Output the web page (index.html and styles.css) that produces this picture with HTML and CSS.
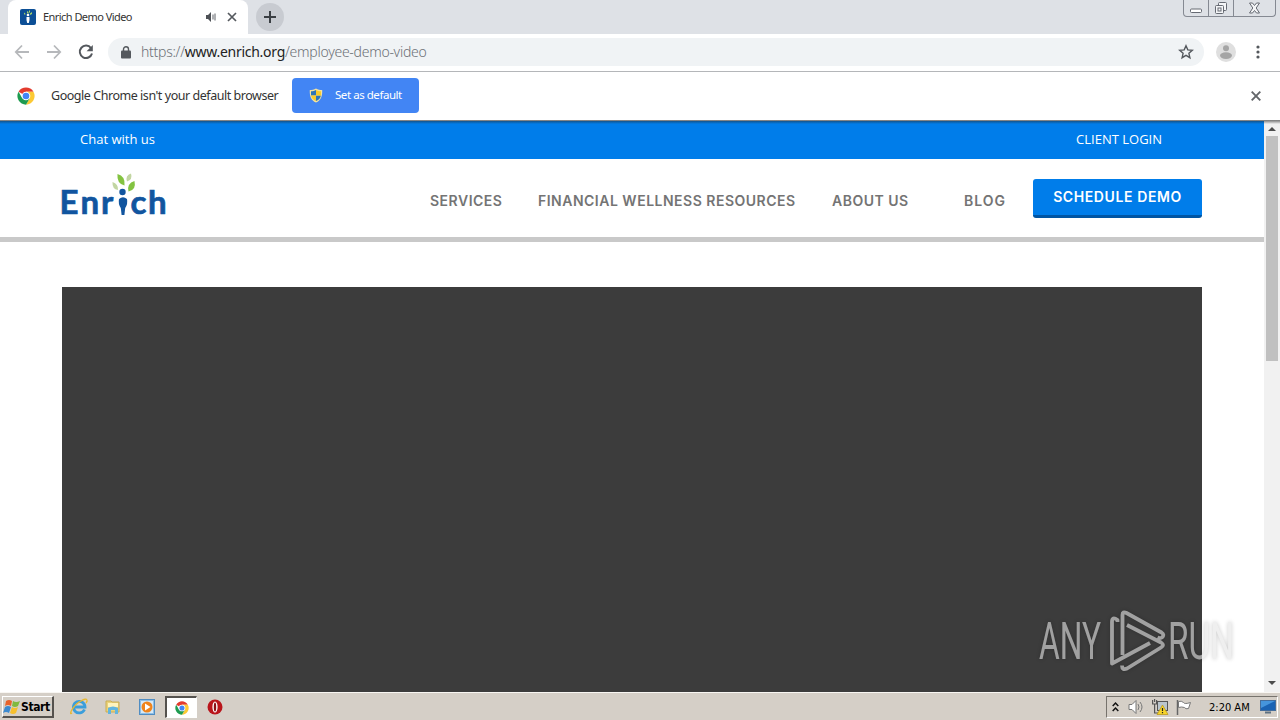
FILE: index.html
```html
<!DOCTYPE html>
<html lang="en">
<head>
  <meta charset="utf-8">
  <title>Enrich Demo Video</title>
  <link rel="stylesheet" href="styles.css">
</head>
<body>
  <svg class="defs" width="0" height="0">
    <symbol id="chrome" viewBox="0 0 48 48">
      <circle cx="24" cy="24" r="23" fill="#fff"/>
      <path d="M24 24 4.100 12.500A23 23 0 0 1 43.900 12.500L24 12.500z" fill="#e33b2e"/>
      <path d="M24 12.500H43.900A23 23 0 0 1 24 47L34 29.700z" fill="#fcc934"/>
      <path d="M4.100 12.500A23 23 0 0 0 24 47L34 29.700 14 29.700z" fill="#1e9b50"/>
      <circle cx="24" cy="24" r="11.500" fill="#fff"/>
      <circle cx="24" cy="24" r="8.800" fill="#4285f4"/>
    </symbol>
  </svg>

  <!-- browser tabs -->
  <div class="tabstrip">
    <div class="tab-edge"></div>
    <div class="tab">
      <svg class="favicon" width="16" height="16" viewBox="0 0 16 16">
        <rect width="16" height="16" rx="2" fill="#0c4f96"/>
        <circle cx="8" cy="6" r="1.300" fill="#fff"/>
        <path d="M6.500 8h3v3L8.800 14H7.200L6.500 11z" fill="#fff"/>
        <path d="M7 2l1.500 1v2L7 4zM4 3.500l1.500 1.200L5 6 4 5zM12 3l-2 1.500v1.500l2-1zM9 1.500h1v2H9z" fill="#a8d468"/>
      </svg>
      <span class="tab-title">Enrich Demo Video</span>
      <svg class="sound" width="12" height="12" viewBox="0 0 12 12">
        <path d="M1 4h2l3-3v10L3 8H1z" fill="#4d5156"/>
        <path d="M8 3.500v5M10 2.500v7" stroke="#5f6368" fill="none"/>
      </svg>
      <svg width="10" height="10" viewBox="0 0 10 10"><path d="M1 1l8 8M9 1L1 9" stroke="#55595e" stroke-width="1.700"/></svg>
    </div>
    <div class="new-tab">
      <svg width="12" height="12" viewBox="0 0 12 12"><path d="M6 0v12M0 6h12" stroke="#3a3e43" stroke-width="2"/></svg>
    </div>
    <div class="window-buttons">
      <div class="min"><svg width="13" height="6" viewBox="0 0 13 6"><rect x=".5" y="1" width="11" height="3.500" rx="1" fill="#fff" stroke="#666a73"/></svg></div>
      <div class="max"><svg width="14" height="14" viewBox="0 0 14 14" fill="#f4f5f7" stroke="#666a73"><rect x="4.500" y="1.500" width="8" height="8" rx="1"/><rect x="1.500" y="4.500" width="8" height="8" rx="1"/><rect x="4" y="7" width="3" height="3"/></svg></div>
      <div class="close"><svg width="13" height="12" viewBox="0 0 13 12"><path d="M1.500 1h3l2 2.500 2-2.500h3L8.200 6l3.300 5h-3l-2-2.500-2 2.500h-3L4.800 6z" fill="#f4f5f7" stroke="#666a73"/></svg></div>
    </div>
  </div>

  <!-- toolbar -->
  <div class="toolbar">
    <svg width="16" height="16" viewBox="0 0 16 16" fill="none" stroke="#b6b8bb" stroke-width="1.800"><path d="M15 8H2M8 1.500L1.800 8 8 14.500"/></svg>
    <svg width="16" height="16" viewBox="0 0 16 16" fill="none" stroke="#b6b8bb" stroke-width="1.800"><path d="M1 8h13M8 1.500L14.200 8 8 14.500"/></svg>
    <svg width="16" height="16" viewBox="0 0 16 16"><path d="M13 4.100A6.200 6.200 0 1 0 14 9.500" fill="none" stroke="#54585d" stroke-width="2"/><path d="M14.800 1v6.200H8.600z" fill="#54585d"/></svg>
    <div class="omnibox">
      <svg width="10" height="13" viewBox="0 0 10 13"><rect x="0" y="4.500" width="10" height="8" rx="1" fill="#54585d"/><path d="M2.500 5V3.300a2.500 2.500 0 0 1 5 0V5" fill="none" stroke="#54585d" stroke-width="1.400"/></svg>
      <span class="url">https://<b>www.enrich.org</b>/employee-demo-video</span>
      <svg class="star" width="16" height="16" viewBox="0 0 16 16"><path d="M8 1.800l1.800 4.100 4.500.4-3.400 3 1 4.400L8 11.400l-3.900 2.300 1-4.400-3.400-3 4.500-.4z" fill="none" stroke="#54585d" stroke-width="1.400"/></svg>
    </div>
    <svg class="avatar" width="20" height="20" viewBox="0 0 20 20"><circle cx="10" cy="10" r="10" fill="#dfdfdf"/><circle cx="10" cy="6.300" r="3" fill="#a5a5a5"/><ellipse cx="10" cy="13.600" rx="6" ry="3.300" fill="#a5a5a5"/></svg>
    <svg class="dots" width="4" height="14" viewBox="0 0 4 14" fill="#54585d"><circle cx="2" cy="2" r="1.600"/><circle cx="2" cy="7" r="1.600"/><circle cx="2" cy="12" r="1.600"/></svg>
  </div>

  <!-- default browser bar -->
  <div class="infobar">
    <svg width="18" height="18"><use href="#chrome"/></svg>
    <span class="infobar-text">Google Chrome isn't your default browser</span>
    <button class="set-default">
      <svg width="14" height="15" viewBox="0 0 14 15"><path d="M7 .5C5 2 3 2 .8 2 .5 8 2 12.500 7 14.500 12 12.500 13.500 8 13.200 2 11 2 9 2 7 .5z" fill="#f3e3a0"/><path d="M7 2C5.500 3 4 3.200 2 3.200V7.500h5z" fill="#2d75b8"/><path d="M7 7.500V13c3-1.300 4.500-3 4.900-5.500z" fill="#2d75b8"/><path d="M7 2c1.500 1 3 1.200 5 1.200V7.500H7zM7 7.500V13C4 11.700 2.500 10 2.100 7.500z" fill="#f8cb2c"/></svg>
      <span>Set as default</span>
    </button>
    <svg class="infobar-close" width="10" height="10" viewBox="0 0 10 10"><path d="M.7.700l8.600 8.600M9.300.7L.7 9.300" stroke="#63666a" stroke-width="1.900"/></svg>
  </div>

  <div class="viewport">
    <div class="page">
      <div class="topbar">
        <a class="chat">Chat with us</a>
        <a class="login">CLIENT LOGIN</a>
      </div>
      <header class="header">
        <svg class="logo" width="108" height="54" viewBox="0 0 108 54">
          <text x="-1.500 19.500 40" y="41" class="logo-text">Enr</text>
          <text x="69.500 87" y="41" class="logo-text">ch</text>
          <circle cx="61.500" cy="19" r="3.200" fill="#11559f"/>
          <path d="M58 26q4-3.500 8 0 1 5-1.800 9l-.8 7h-2.800l-.8-7q-2.800-4-1.800-9z" fill="#11559f"/>
          <path d="M56.500 1q8 2 7 11.500-8-2-7-11.500z" fill="#83c341"/>
          <path d="M73.500 8q2 9-6 10.500-2-8 6-10.500z" fill="#83c341"/>
          <path d="M70 .5q2 6-4 8-2-6 4-8zM51.500 9q6 2 5.500 8-6-1-5.500-8z" fill="#c2d6a2"/>
        </svg>
        <nav class="menu">
          <a class="services">SERVICES</a>
          <a class="resources">FINANCIAL WELLNESS RESOURCES</a>
          <a class="about">ABOUT US</a>
          <a class="blog">BLOG</a>
        </nav>
        <a class="demo">SCHEDULE DEMO</a>
      </header>
      <div class="video"></div>
    </div>
    <div class="scrollbar">
      <div class="arrow-up"></div>
      <div class="thumb"></div>
      <div class="arrow-down"></div>
    </div>
    <svg class="watermark" width="208" height="72" viewBox="0 0 208 72">
      <text x="3" y="53" textLength="62" lengthAdjust="spacingAndGlyphs">ANY</text>
      <text x="132" y="53" textLength="66" lengthAdjust="spacingAndGlyphs">RUN</text>
      <g fill="none" stroke-width="3.800" stroke-linejoin="round">
        <path d="M81.500 16v-2q-5.500-4-5.500 2v41.500L114 37"/>
        <path d="M86.500 49V9q0-4 4-2l35 19.500q3 2 1 4.500-2 2-5 .5"/>
        <path d="M91 19l34 17.500q4 2.500 0 5L91 62.500q-5 2-5-3"/>
      </g>
    </svg>
  </div>

  <!-- windows taskbar -->
  <div class="taskbar">
    <div class="start">
      <svg width="18" height="17" viewBox="0 0 18 17"><path d="M3 3q3-2 6 0L8 8Q5 6 2 8z" fill="#e8632c"/><path d="M10 3q3 2 7 0l-2 5q-3 2-6 0z" fill="#80b93f"/><path d="M2 9q3-2 6 0l-2 6q-3-2-6 0z" fill="#3d8ad0"/><path d="M9 9q3 2 6 0l-2 6q-3 2-6 0z" fill="#f6bf2d"/></svg>
      <span>Start</span>
    </div>
    <div class="quick">
      <svg width="18" height="18" viewBox="0 0 18 18"><path d="M14.500 11.500A5.800 5.800 0 1 1 15 9H5" fill="none" stroke="#3b9edb" stroke-width="2.800"/><path d="M2 15C-2 18 3 7 11 3q5-3 6-1 .6 1-1 3" fill="none" stroke="#e7b832" stroke-width="1.300"/></svg>
    </div>
    <div class="quick">
      <svg width="16" height="16" viewBox="0 0 16 16"><path d="M1 2h5l1 1h7v10H1z" fill="#ead27a" stroke="#c9ad55"/><path d="M3 4h10v4H3z" fill="#fff4bd"/><path d="M3 15V9q5-3 10 0v6h-3v-4H6v4z" fill="#62b5df"/></svg>
    </div>
    <div class="quick">
      <svg width="16" height="16" viewBox="0 0 16 16"><rect x=".5" y=".5" width="15" height="15" fill="#8dbfe7" stroke="#508dc2"/><rect x="2" y="2" width="12" height="12" fill="#d6e9f7"/><circle cx="8" cy="8" r="5.500" fill="#ef841c"/><path d="M6 4.500L11.500 8 6 11.500z" fill="#fff"/></svg>
    </div>
    <div class="quick active"><svg width="14" height="14"><use href="#chrome"/></svg></div>
    <div class="quick">
      <svg width="16" height="16" viewBox="0 0 16 16"><circle cx="8" cy="8" r="7.500" fill="#b9151b"/><ellipse cx="8" cy="8" rx="2.600" ry="5.600" fill="#fff"/><ellipse cx="8" cy="8" rx="1.200" ry="4.600" fill="#8b1015"/></svg>
    </div>
    <div class="tray">
      <svg class="chevrons" width="7" height="10" viewBox="0 0 7 10"><path d="M.7 4l2.800-3 2.800 3M.7 9l2.800-3 2.800 3" fill="none" stroke="#111" stroke-width="1.500"/></svg>
      <svg class="volume" width="16" height="16" viewBox="0 0 16 16"><path d="M1 5.500h3l4-4v13l-4-4H1z" fill="#fff" stroke="#777"/><path d="M10 5q2 3 0 6M12 3q4 5 0 10" fill="none" stroke="#777"/></svg>
      <svg class="network" width="16" height="16" viewBox="0 0 16 16"><rect x="5.500" y="2.500" width="10" height="9" fill="#bbc5cc" stroke="#555"/><path d="M.6 1v4h4V1M2.600 5v9h5M2.600 0v3" fill="none" stroke="#555" stroke-width="1.200"/><path d="M10.500 6L16 15.500H5z" fill="#f7d42a" stroke="#b89410" stroke-width=".7"/><path d="M10.500 9v3M10.500 13v1.200" stroke="#222" stroke-width="1.200"/></svg>
      <svg class="flag" width="16" height="16" viewBox="0 0 16 16"><path d="M1.500 1v15" stroke="#666" stroke-width="1.500"/><path d="M2.500 2.500q3-1 5 1 1 2 7 0l-2 6q-3 1-4-1-3-1-6 0z" fill="#fff" stroke="#777"/></svg>
      <span class="clock">2:20 AM</span>
      <svg width="16" height="14" viewBox="0 0 16 14"><rect x=".5" y=".5" width="15" height="10" fill="#1b63b3" stroke="#456d9b"/><path d="M1 1h14L1 8z" fill="#4695dc"/><path d="M5 12.500h6" stroke="#5e7182" stroke-width="2"/></svg>
    </div>
  </div>
</body>
</html>
```
FILE: styles.css
```css
* {
  box-sizing: border-box;
}

body {
  margin: 0;
  width: 1280px;
  height: 720px;
  overflow: hidden;
  display: flex;
  flex-direction: column;
  background: #fff;
  font-family: "Noto Sans", "Open Sans", sans-serif;
}

svg {
  display: block;
  flex: none;
  overflow: visible;
}

.defs {
  position: absolute;
}

.tabstrip {
  flex: none;
  height: 34px;
  display: flex;
  background: #dee1e6;
}

.tab-edge {
  width: 8px;
  background: #dee1e6;
  border-radius: 0 0 8px 0;
}

.tab {
  width: 240px;
  height: 34px;
  padding: 0 11px 0 12px;
  display: flex;
  align-items: center;
  background: #fff;
  border-radius: 8px 8px 0 0;
}

.tab-title {
  width: 162px;
  margin-left: 7px;
  padding-bottom: 1px;
  font: 11px "Noto Sans", sans-serif;
  letter-spacing: -0.55px;
  white-space: nowrap;
  color: #333;
}

.sound {
  margin-right: 10px;
}

.new-tab {
  width: 28px;
  height: 28px;
  margin: 3px 0 0 8px;
  border-radius: 50%;
  background: #c8cbd1;
  display: flex;
  align-items: center;
  justify-content: center;
}

.window-buttons {
  height: 17px;
  margin-left: auto;
  margin-right: 4px;
  display: flex;
  border: 1px solid #858992;
  border-top: 0;
  border-radius: 0 0 4px 4px;
}

.window-buttons div {
  display: flex;
  align-items: center;
  justify-content: center;
}

.window-buttons .min {
  width: 24px;
  padding-top: 5px;
}

.window-buttons .max {
  width: 26px;
  border-left: 1px solid #858992;
  border-right: 1px solid #858992;
}

.window-buttons .close {
  width: 41px;
}

.toolbar {
  flex: none;
  height: 38px;
  padding: 0 20px 1px 14px;
  display: flex;
  align-items: center;
  gap: 16px;
  border-bottom: 1px solid #b4b6b9;
}

.omnibox {
  width: 1096px;
  height: 28px;
  margin-left: -2px;
  padding: 0 10px 0 13px;
  display: flex;
  align-items: center;
  background: #f0f3f5;
  border-radius: 14px;
}

.url {
  margin-left: 10px;
  padding-bottom: 2px;
  font-size: 14px;
  font-weight: 300;
  letter-spacing: -0.27px;
  color: #6c7075;
}

.url b {
  font-weight: 400;
  color: #222;
}

.star {
  margin-left: auto;
}

.avatar {
  margin-left: -4px;
}

.dots {
  margin-left: 4px;
}

.infobar {
  flex: none;
  height: 49px;
  padding: 0 19px 2px 17px;
  display: flex;
  align-items: center;
}

.infobar-text {
  width: 241px;
  margin-left: 16px;
  padding-bottom: 1px;
  font-size: 12.5px;
  letter-spacing: -0.46px;
  white-space: nowrap;
  color: #333;
}

.set-default {
  width: 127px;
  height: 35px;
  padding: 0 0 0 17px;
  display: flex;
  align-items: center;
  gap: 12px;
  border: 0;
  border-radius: 4px;
  background: #4285f4;
  color: #fff;
  font: 11.5px "Noto Sans", sans-serif;
  letter-spacing: -0.45px;
  white-space: nowrap;
}

.set-default span {
  padding-bottom: 2px;
}

.infobar-close {
  margin-left: auto;
}

.viewport {
  position: relative;
  height: 571px;
  display: flex;
}

.viewport::before {
  content: "";
  position: absolute;
  left: 0;
  right: 0;
  top: -1px;
  height: 4px;
  background: linear-gradient(rgba(40, 40, 40, .65), rgba(40, 40, 40, 0));
}

.page {
  width: 1264px;
  overflow: hidden;
}

.topbar {
  height: 38px;
  padding: 0 102px 2px 80px;
  display: flex;
  align-items: center;
  justify-content: space-between;
  background: #007dea;
  color: #fff;
  font-family: "Open Sans", sans-serif;
  font-size: 13px;
}

.header {
  height: 83px;
  padding-left: 61px;
  display: flex;
  border-bottom: 5px solid #c9c9c9;
}

.logo {
  margin-top: 14px;
}

.logo-text {
  font: bold 33px Lato, sans-serif;
  fill: #11559f;
  stroke: #11559f;
  stroke-width: .7px;
}

.menu {
  width: 603px;
  margin-left: 261px;
  padding-top: 33px;
  display: grid;
  grid-template-columns: 108px 294px 132px 69px;
  font: 600 14px/18px Inter, sans-serif;
  letter-spacing: 0.5px;
  color: #747474;
  white-space: nowrap;
}

.blog {
  letter-spacing: 1px;
}

.demo {
  width: 169px;
  height: 39px;
  margin-top: 20px;
  border-bottom: 3px solid #0055a3;
  border-radius: 3px;
  background: #007dea;
  color: #fff;
  font: 600 14px/36px Inter, sans-serif;
  letter-spacing: 0.6px;
  text-align: center;
}

.video {
  width: 1140px;
  height: 405px;
  margin: 45px 0 0 62px;
  background: #3c3c3c;
}

.scrollbar {
  width: 16px;
  display: flex;
  flex-direction: column;
  align-items: center;
  background: #f1f1f1;
}

.arrow-up {
  margin-top: 6px;
  border: 4px solid transparent;
  border-top: 0;
  border-bottom-color: #4c4c4c;
}

.thumb {
  width: 12px;
  height: 225px;
  margin-top: 5px;
  background: #c0c0c0;
}

.arrow-down {
  margin-top: auto;
  margin-bottom: 7px;
  border: 4px solid transparent;
  border-bottom: 0;
  border-top-color: #4c4c4c;
}

/* translucent mark over the page */
.watermark {
  position: absolute;
  left: 1036px;
  top: 485px;
  opacity: .6;
  filter: drop-shadow(0 0 2px rgba(0, 0, 0, .35));
}

.watermark text {
  font: 400 52px Roboto, sans-serif;
  fill: #e5e5e5;
}

.watermark g {
  stroke: #e5e5e5;
}

.taskbar {
  flex: none;
  height: 28px;
  padding: 3px 2px 2px;
  display: flex;
  background: #d5cfc7;
  border-top: 1px solid #f8f6f2;
}

.start {
  width: 52px;
  height: 22px;
  margin-right: 9px;
  display: flex;
  align-items: center;
  border: 1px solid #fff;
  border-right: 2px solid #55524e;
  border-bottom: 2px solid #55524e;
  font: bold 12px "DejaVu Sans Condensed", sans-serif;
  letter-spacing: -0.4px;
  color: #000;
}

.quick {
  width: 32px;
  height: 22px;
  margin-right: 2px;
  display: flex;
  align-items: center;
  justify-content: center;
}

.quick.active {
  background: #fff;
  border: 1px solid #fff;
  border-top: 2px solid #55524e;
  border-left: 2px solid #55524e;
}

.tray {
  width: 172px;
  height: 22px;
  margin-left: auto;
  padding: 0 1px 0 5px;
  display: flex;
  align-items: center;
  border: 1px solid #fff;
  border-top-color: #77736d;
  border-left-color: #77736d;
}

.volume {
  margin-left: 9px;
}

.network {
  margin-left: 8px;
}

.flag {
  margin-left: 8px;
}

.clock {
  width: 51px;
  margin-left: 17px;
  font: 11px "DejaVu Sans Condensed", sans-serif;
  color: #000;
  white-space: nowrap;
}
```
